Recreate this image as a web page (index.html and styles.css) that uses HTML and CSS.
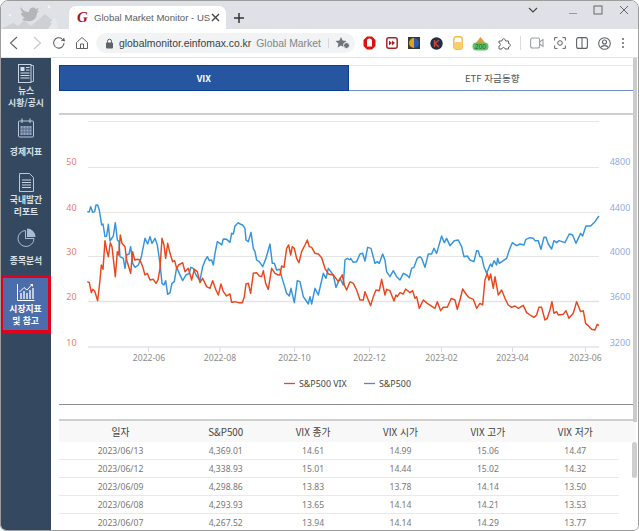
FILE: index.html
```html
<!DOCTYPE html>
<html lang="ko">
<head>
<meta charset="utf-8">
<title>Global Market Monitor</title>
<link rel="stylesheet" href="styles.css">
</head>
<body>
<div class="window">
  <header class="tabstrip">
    <svg class="doodle" width="68" height="28" viewBox="0 0 68 28">
      <path d="M0 28 L12 22 L17 25 L23 19 L30 25 L44 13 L52 20 L60 28Z" fill="#ced0d4"/>
      <path d="M47 28 L51 22 L49 22 L53 17 L57 22 L55 22 L59 28Z" fill="#e6e8ea"/>
      <path d="M20 6 C22 10 25 11 28 11 C28 7 32 5 35 8 L38 7 L36 10 L38 10 L36 12 C36 18 31 21 26 20 C24 20 22 19 21 18 L24 17 C21 15 20 14 20 12 L22 12 C20 10 19 8 20 6Z" fill="#b4b5b8"/>
      <circle cx="9" cy="14" r="1.2" fill="#f4f4f4"/><circle cx="48" cy="6" r="1.4" fill="#f4f4f4"/>
    </svg>
    <div class="tab">
      <span class="favicon">G</span>
      <span class="tab-title">Global Market Monitor - US</span>
      <svg class="tab-close" width="9" height="9" viewBox="0 0 9 9"><path d="M1 1L8 8M8 1L1 8" stroke="#444" stroke-width="1.4"/></svg>
    </div>
    <svg class="newtab" width="10" height="10" viewBox="0 0 10 10"><path d="M5 0V10M0 5H10" stroke="#333" stroke-width="1.5"/></svg>
    <div class="winctl">
      <svg width="10" height="6" viewBox="0 0 10 6" class="wc-chev"><path d="M1 1L5 5L9 1" fill="none" stroke="#444" stroke-width="1.1"/></svg>
      <svg width="10" height="10" viewBox="0 0 10 10" class="wc-min"><path d="M1 8.5H9" stroke="#999" stroke-width="1.2"/></svg>
      <svg width="10" height="10" viewBox="0 0 10 10" class="wc-max"><rect x="1" y="1" width="8" height="8" fill="none" stroke="#666"/></svg>
      <svg width="10" height="10" viewBox="0 0 10 10" class="wc-close"><path d="M1 1L9 9M9 1L1 9" stroke="#666" stroke-width="1"/></svg>
    </div>
  </header>
  <div class="toolbar">
    <svg class="nav-ic" width="16" height="16" viewBox="0 0 16 16"><path d="M11 2L4.5 8L11 14" fill="none" stroke="#5f6368" stroke-width="1.1"/></svg>
    <svg class="nav-ic" width="16" height="16" viewBox="0 0 16 16"><path d="M5 2L11.500 8L5 14" fill="none" stroke="#c4c6c9" stroke-width="1.1"/></svg>
    <svg class="nav-ic" width="16" height="16" viewBox="0 0 16 16"><path d="M13 8A5.200 5.200 0 1 1 11 3.800" fill="none" stroke="#5f6368" stroke-width="1.100"/><path d="M10 6H14.500L12.500 2.500Z" fill="#5f6368" transform="rotate(15 12 5)"/></svg>
    <svg class="nav-ic" width="16" height="16" viewBox="0 0 16 16"><path d="M2.500 7.500L8 2.500L13.500 7.500V13.500H2.500Z M6.500 13.500V9H9.500V13.500" fill="none" stroke="#5f6368" stroke-width="1"/></svg>
    <div class="omnibox">
      <svg width="9" height="11" viewBox="0 0 9 11" class="lock"><rect x="1" y="4.500" width="7" height="6" rx="1" fill="#5f6368"/><path d="M2.500 5V3.200A2 2 0 0 1 6.500 3.200V5" fill="none" stroke="#5f6368" stroke-width="1"/></svg>
      <span class="url">globalmonitor.einfomax.co.kr</span>
      <span class="page-name">Global Market</span>
      <span class="omni-end">
        <svg width="16" height="14" viewBox="0 0 16 14"><path d="M6 1L7.600 4.500L11.500 5L8.600 7.500L9.400 11.500L6 9.500L2.600 11.500L3.400 7.500L0.500 5L4.400 4.500Z" fill="#70757a"/><circle cx="11.500" cy="9.500" r="3" fill="#70757a" stroke="#f1f3f4"/></svg>
      </span>
    </div>
    <div class="exts">
      <svg width="13" height="14" viewBox="0 0 13 14"><path d="M4 0.500H9L12.500 4V10L9 13.500H4L0.500 10V4Z" fill="#d8150c"/><path d="M4 10.500V5A1 1 0 0 1 9 5V10.500Z" fill="#fff"/></svg>
      <svg width="12" height="12" viewBox="0 0 12 12"><rect x="0.800" y="0.800" width="10.400" height="10.400" rx="2" fill="#fff" stroke="#a8242c" stroke-width="1.500"/><path d="M3 3.500L6 6L3 8.500ZM6 3.500L9 6L6 8.500Z" fill="#a8242c"/></svg>
      <svg width="12" height="12" viewBox="0 0 12 12"><rect width="12" height="12" fill="#3a3a30"/><path d="M6 1A5 5 0 0 0 6 11Z" fill="#e0a020"/><path d="M6 1A5 5 0 0 1 6 11Z" fill="#2a5ab0"/></svg>
      <svg width="13" height="13" viewBox="0 0 13 13"><circle cx="6.500" cy="6.500" r="6.200" fill="#1d3045"/><path d="M4.500 3V10M9 3L5 6.500L9 10" fill="none" stroke="#c8463c" stroke-width="1.500"/></svg>
      <svg width="10" height="14" viewBox="0 0 10 14"><rect x="0.800" y="0.800" width="8.400" height="12.400" rx="2.500" fill="#fff" stroke="#f4b942" stroke-width="1.400"/><rect x="1" y="6" width="8" height="7" rx="2" fill="#f9cf6e"/></svg>
      <svg class="ext-200" width="17" height="15" viewBox="0 0 17 15"><path d="M3 8L8.500 1L14 8Z" fill="#e39a3a"/><rect x="0.500" y="6.500" width="16" height="8" rx="4" fill="#5cc36b"/><text x="8.500" y="13.200" text-anchor="middle" class="ext-200-text">200</text></svg>
      <svg width="13" height="13" viewBox="0 0 13 13"><path d="M1 4H4C4 1 7.500 1 7.500 4H10.500V6.500C13 6.500 13 10 10.500 10V12H7C7 10 4 10 4 12H1V9C3 9 3 6 1 6Z" fill="none" stroke="#5f6368" stroke-width="1"/></svg>
      <i class="ext-sep"></i>
      <svg width="14" height="12" viewBox="0 0 14 12"><rect x="0.600" y="1" width="9" height="10" rx="2" fill="none" stroke="#9aa0a6" stroke-width="1.100"/><path d="M9.600 5L13 2.500V9.500L9.600 7" fill="none" stroke="#9aa0a6" stroke-width="1.100"/></svg>
      <svg width="12" height="12" viewBox="0 0 12 12"><path d="M0.600 3.500V0.600H3.500M8.500 0.600H11.400V3.500M11.400 8.500V11.400H8.500M3.500 11.400H0.600V8.500" fill="none" stroke="#5f6368"/><circle cx="6" cy="6" r="2.300" fill="none" stroke="#5f6368"/></svg>
      <svg width="12" height="12" viewBox="0 0 12 12"><rect x="0.600" y="0.600" width="10.800" height="10.800" rx="2" fill="none" stroke="#5f6368" stroke-width="1.100"/><path d="M6 0.600V11.400" stroke="#5f6368" stroke-width="1.100"/></svg>
      <svg width="13" height="13" viewBox="0 0 13 13"><circle cx="6.500" cy="6.500" r="5.800" fill="none" stroke="#5f6368" stroke-width="1.100"/><circle cx="6.500" cy="5" r="2" fill="none" stroke="#5f6368" stroke-width="1.100"/><path d="M2.700 10.500C4 8 9 8 10.300 10.500" fill="none" stroke="#5f6368" stroke-width="1.100"/></svg>
      <svg width="4" height="12" viewBox="0 0 4 12"><circle cx="2" cy="2" r="1" fill="#5f6368"/><circle cx="2" cy="6" r="1" fill="#5f6368"/><circle cx="2" cy="10" r="1" fill="#5f6368"/></svg>
    </div>
  </div>
  <div class="page">
    <nav class="sidebar">
      <a class="item item-news">
        <span class="ic"><svg width="16" height="19" viewBox="0 0 16 19"><path d="M13 1.500H15.500V17.500H13" fill="none" stroke="#a9bbd6"/><rect x="0.500" y="0.500" width="12.500" height="18" fill="none" stroke="#c7d4e6"/><rect x="2.500" y="3" width="4" height="4" fill="#d4deeb"/><path d="M8 3.500H11.500M8 6H11.500M2.500 9H11.500M2.500 11.500H11.500M2.500 14H11.500" stroke="#d4deeb"/></svg></span>
        <span>뉴스</span><span>시황/공시</span>
      </a>
      <a class="item item-econ">
        <span class="ic"><svg width="16" height="20" viewBox="0 0 16 20"><rect x="0.500" y="3" width="15" height="16" rx="1" fill="none" stroke="#b9c8dd"/><path d="M4 0.500V5M12 0.500V5" stroke="#c7d4e6"/><path d="M2.500 8H13.500V17H2.500Z" fill="#8fa5c4"/><path d="M5 8V17M8 8V17M11 8V17M2.500 11H13.500M2.500 14H13.500" stroke="#3a4f69" stroke-width=".6"/></svg></span>
        <span>경제지표</span>
      </a>
      <a class="item item-report">
        <span class="ic"><svg width="15" height="19" viewBox="0 0 15 19"><path d="M0.500 0.500H10.500L14.500 4.500V18.500H0.500Z" fill="none" stroke="#b9c8dd"/><path d="M3 7H12M3 9.500H12M3 12H12M3 14.500H12" stroke="#c7d4e6"/></svg></span>
        <span>국내발간</span><span>리포트</span>
      </a>
      <a class="item item-stock">
        <span class="ic"><svg width="19" height="19" viewBox="0 0 19 19"><path d="M8.500 2.500A8 8 0 1 0 17 10.500H8.500Z" fill="none" stroke="#a9bbd6"/><path d="M10 0.500A8.500 8.500 0 0 1 18.500 9H10Z" fill="#a9bbd6"/></svg></span>
        <span>종목분석</span>
      </a>
      <a class="item item-market">
        <span class="ic"><svg width="18" height="18" viewBox="0 0 18 18"><path d="M0.500 1V17.500H17.500" fill="none" stroke="#fff"/><path d="M4 16V10M7 16V8M10 16V10M13 16V7M16 16V5" stroke="#fff" stroke-width="1.300"/><path d="M2.500 9L7 4.500L10 7L15 1.500" fill="none" stroke="#fff"/><path d="M13 1H16V4Z" fill="#fff"/></svg></span>
        <span>시장지표</span><span>및 참고</span>
      </a>
    </nav>
    <main class="main">
      <div class="tabs">
        <div class="tab-btn on">VIX</div>
        <div class="tab-btn">ETF 자금동향</div>
      </div>
      <div class="chart-wrap">
        <svg class="chart" width="574" height="289" viewBox="59 115 574 289">
          <g class="grid">
            <path d="M88 121.500H599M88 167.500H599M88 212.500H599M88 256.500H599"/>
            <path class="grid-strong" d="M88 301.500H599M88 347H599"/>
            <path d="M148.500 347V352M220 347V352M294.500 347V352M369.500 347V352M441.500 347V352M512.500 347V352M585.500 347V352"/>
          </g>
          <g class="axis-l">
            <text x="71.500" y="165.300">50</text><text x="71.500" y="210.500">40</text><text x="71.500" y="255.300">30</text><text x="71.500" y="300.300">20</text><text x="71.500" y="345.500">10</text>
          </g>
          <g class="axis-r">
            <text x="620" y="165.300">4800</text><text x="620" y="210.500">4400</text><text x="620" y="255.300">4000</text><text x="620" y="300.300">3600</text><text x="620" y="345.500">3200</text>
          </g>
          <g class="axis-x">
            <text x="149" y="361">2022-06</text><text x="220" y="361">2022-08</text><text x="294.500" y="361">2022-10</text><text x="369.500" y="361">2022-12</text><text x="441.500" y="361">2023-02</text><text x="512.500" y="361">2023-04</text><text x="585.500" y="361">2023-06</text>
          </g>
          <g transform="translate(60 230) scale(.3333)">
            <polyline class="blue" points="82,-55 88,-55 92,-70 98,-53 104,-55 108,-75 113,-75 118,-60 125,-15 129,-18 135,20 140,18 145,-17 150,33 160,18 166,-22 172,30 177,35 180,80 190,85 195,115 200,75 207,72 212,50 218,100 225,112 235,105 243,85 255,25 263,42 270,20 276,40 285,25 292,45 300,100 306,160 312,165 317,152 323,193 330,188 336,160 343,155 350,112 358,130 368,152 378,135 388,130 392,112 400,115 408,135 420,152 428,110 435,92 442,80 448,92 455,90 460,105 465,70 472,35 480,40 485,45 490,27 500,28 510,37 515,10 520,12 525,-12 535,-22 540,-18 548,-15 555,-5 558,30 565,35 573,7 580,55 585,65 590,90 598,95 608,110 618,85 630,42 637,100 643,100 650,120 660,118 665,140 680,190 688,198 693,175 703,218 712,152 720,155 730,200 745,222 750,200 755,222 765,175 775,195 790,130 798,145 805,115 820,135 828,172 840,145 850,165 855,90 862,85 870,90"/>
            <polyline class="blue" transform="translate(840 0)" points="30,90 32,85 40,97 50,95 60,72 68,70 75,93 83,52 93,55 105,100 112,95 118,100 128,72 135,90 140,125 150,140 160,122 170,140 180,150 190,130 200,135 208,143 215,115 222,112 232,85 240,80 245,85 255,112 265,72 275,72 282,55 290,70 305,18 313,38 320,25 330,47 343,32 355,30 365,50 372,80 382,78 390,90 402,95 410,62 415,63 420,80 425,80 432,110 440,130 448,110 452,102 456,110 462,92 470,105 473,85 478,100 490,92 500,85 508,60 517,38 530,47 540,42 552,45 558,28 570,23 580,25 585,32 595,32 603,58 612,22 618,22 625,42 635,57 642,32 650,38 657,32 675,38 688,12 698,15 708,40 722,10 728,18 738,-12 752,-12 765,-25 777,-42"/>
            <polyline class="orange" points="82,155 88,158 94,188 98,178 104,183 113,212 120,150 124,105 129,118 135,32 140,60 145,80 151,38 156,50 166,140 172,65 176,75 181,15 186,40 195,50 200,90 212,130 218,65 224,90 232,88 240,90 248,110 255,135 262,130 270,150 280,148 288,160 294,150 300,115 306,25 312,45 317,85 323,40 330,70 338,95 344,92 350,115 356,105 368,98 375,125 385,115 395,150 403,118 412,125 420,158 428,145 440,170 450,175 458,152 468,180 475,195 483,162 490,185 500,198 510,192 515,217 525,215 535,218 547,218 553,200 558,162 565,160 572,190 580,130 590,128 598,138 605,140 610,122 617,160 625,178 635,115 645,130 655,135 660,135 665,108 672,112 680,55 686,45 692,75 697,50 703,55 710,85 717,98 725,65 735,45 742,30 748,50 755,52 765,70 775,72 785,83 795,115 805,132 820,135 835,155 847,135 853,165 860,180 870,155"/>
            <polyline class="orange" transform="translate(840 0)" points="30,155 40,160 50,180 60,210 70,210 75,185 85,210 92,227 100,200 108,180 118,182 125,148 135,195 140,178 150,182 162,213 168,195 172,200 180,188 190,192 197,177 210,188 218,182 225,205 230,200 238,235 250,210 262,220 285,235 292,215 302,242 310,232 322,232 334,205 345,210 352,238 360,210 368,177 380,195 388,203 400,208 410,235 420,220 428,225 435,150 442,130 447,150 452,132 460,175 465,140 475,195 485,180 495,205 505,225 515,232 525,228 535,235 550,226 560,248 575,258 582,262 590,255 597,232 605,232 615,270 622,265 630,240 636,215 642,250 650,245 655,255 670,253 678,242 687,265 700,250 710,215 722,245 730,242 737,280 745,287 755,298 765,300 772,283 777,287"/>
          </g>
          <g class="legend">
            <path d="M284 383.500H295" class="leg-o"/><text x="299" y="387">S&amp;P500 VIX</text>
            <path d="M364 383.500H375" class="leg-b"/><text x="379" y="387">S&amp;P500</text>
          </g>
        </svg>
      </div>
      <section class="grid-table">
        <div class="thead">
          <span>일자</span><span>S&amp;P500</span><span>VIX 종가</span><span>VIX 시가</span><span>VIX 고가</span><span>VIX 저가</span>
        </div>
        <div class="trow"><span>2023/06/13</span><span>4,369.01</span><span>14.61</span><span>14.99</span><span>15.06</span><span>14.47</span></div>
        <div class="trow"><span>2023/06/12</span><span>4,338.93</span><span>15.01</span><span>14.44</span><span>15.02</span><span>14.32</span></div>
        <div class="trow"><span>2023/06/09</span><span>4,298.86</span><span>13.83</span><span>13.78</span><span>14.14</span><span>13.50</span></div>
        <div class="trow"><span>2023/06/08</span><span>4,293.93</span><span>13.65</span><span>14.14</span><span>14.21</span><span>13.53</span></div>
        <div class="trow"><span>2023/06/07</span><span>4,267.52</span><span>13.94</span><span>14.14</span><span>14.29</span><span>13.77</span></div>
      </section>
    </main>
    <div class="page-scroll"></div>
    <div class="table-scroll"></div>
  </div>
</div>
</body>
</html>
```
FILE: styles.css
```css
* { box-sizing: border-box; }
html, body { margin: 0; height: 100%; background: #fff; overflow: hidden; }
body { font-family: "Noto Sans", "Noto Sans CJK KR", sans-serif; }

.window {
  width: 639px; height: 531px;
  display: flex; flex-direction: column;
  border: 1px solid #9c9c9c;
  border-radius: 8px 8px 6px 6px;
  overflow: hidden;
  background: #fff;
}

/* browser chrome */
.tabstrip { height: 28px; background: #dee1e6; display: flex; align-items: flex-end; position: relative; flex: none; }
.doodle { flex: none; }
.tab {
  width: 157px; height: 23px;
  background: #fff; border-radius: 7px 7px 0 0;
  display: flex; align-items: center; padding: 0 7px 0 8px; flex: none;
}
.favicon { font: italic 700 15px "Liberation Serif", serif; color: #a8101c; width: 17px; flex: none; }
.tab-title { font: 9.6px "Liberation Sans", sans-serif; color: #5a5e62; white-space: nowrap; width: 113px; flex: none; }
.tab-close { margin-left: 4px; flex: none; }
.newtab { margin: 0 0 6px 8px; flex: none; }
.winctl { margin-left: auto; align-self: flex-start; height: 18px; display: flex; align-items: center; padding-right: 9px; }
.winctl svg { display: block; }
.wc-chev { margin-right: 30px; }
.wc-min { margin-right: 15px; }
.wc-max { margin-right: 16px; }

.toolbar { height: 29px; flex: none; background: #fff; border-bottom: 1px solid #e2e3e5; display: flex; align-items: center; padding-left: 5px; }
.nav-ic { flex: none; margin-right: 6.5px; }
.omnibox {
  width: 259px; height: 20px; flex: none;
  background: #f1f3f4; border-radius: 10px;
  display: flex; align-items: center; padding-left: 9px;
  font: 10.4px "Liberation Sans", sans-serif; white-space: nowrap; position: relative;
}
.lock { flex: none; margin-right: 5px; }
.url { color: #3c4043; }
.page-name { color: #80868b; margin-left: 5px; }
.omni-end { position: absolute; right: 0; top: 0; height: 20px; width: 25px; display: flex; align-items: center; padding-left: 5px; border-radius: 0 10px 10px 0; }
.omni-end::before { content: ""; position: absolute; left: -2px; top: 5px; width: 1px; height: 10px; background: #d4d6d9; }
.exts { display: flex; align-items: center; gap: 10px; margin-left: 8px; }
.exts svg { display: block; flex: none; }
.ext-200 { margin: 0 -1px; }
.ext-200-text { font: 6.5px "Liberation Sans", sans-serif; fill: #1c5a2a; }
.ext-sep { width: 1px; height: 14px; background: #dadce0; margin: 0 -1px; }

/* page */
.page { flex: 1; min-height: 0; display: flex; position: relative; background: #fff; }
.sidebar { width: 50px; flex: none; background: #34495f; display: flex; flex-direction: column; }
.item {
  display: flex; flex-direction: column; align-items: center;
  color: #d9e0e8; font: 700 8.8px/12px "Noto Sans CJK KR", sans-serif; white-space: nowrap;
}
.ic { height: 23px; display: flex; align-items: center; justify-content: center; }
.ic svg { display: block; }
.item-news { height: 55px; padding-top: 4px; }
.item-econ { height: 51px; padding-top: 3px; }
.item-econ .ic { margin-bottom: 7px; }
.item-report { height: 54px; padding-top: 7px; }
.item-stock { height: 57px; padding-top: 8px; }
.item-stock .ic { margin-bottom: 6px; }
.item-market { height: 58px; padding-top: 2px; background: #4b6dac; border: 3px solid #e2001a; border-left-width: 2px; color: #fff; }

.main { flex: 1; min-width: 0; padding: 7px 2px 0 8px; overflow: hidden; }
.tabs { display: flex; height: 26px; }
.tab-btn {
  flex: 1; display: flex; align-items: center; justify-content: center;
  font: 9.6px "Noto Sans CJK KR", sans-serif; color: #555;
  border-top: 1px solid #e8e8e8; border-bottom: 1px solid #6f8dc2;
}
.tab-btn.on { background: #25569f; border: 1px solid #0b3f96; color: #fff; font-weight: 700; font-size: 9px; }
.chart-wrap { margin-top: 22px; border-top: 2px solid #cfcfcf; border-bottom: 1px solid #8d8d8d; height: 292px; }
.chart { display: block; }
.grid path { stroke: #e6e6e6; fill: none; }
.grid .grid-strong { stroke: #e2e4ec; stroke-width: 1.500; }
.grid path:last-child { stroke: #d6dce6; }
.axis-l text { font: 9px "Noto Sans", sans-serif; fill: #ea7d72; text-anchor: middle; }
.axis-r text { font: 9px "Noto Sans", sans-serif; fill: #93aadb; text-anchor: middle; }
.axis-x text { font: 8.6px "Noto Sans", sans-serif; fill: #8a8a8a; text-anchor: middle; }
polyline { fill: none; stroke-width: 4.4; stroke-linejoin: round; }
.blue { stroke: #3495dc; }
.orange { stroke: #e8481c; }
.legend text { font: 8.900px "Noto Sans", sans-serif; fill: #444; }
.leg-o { stroke: #e8481c; stroke-width: 1.300; }
.leg-b { stroke: #3495dc; stroke-width: 1.300; }

.grid-table { margin-top: 14px; }
.thead, .trow { display: grid; grid-template-columns: 123px repeat(5, 87.4px); text-align: center; white-space: nowrap; }
.thead { height: 23px; align-items: center; background: #f8f8f8; border-top: 2px solid #cfcfcf; font: 9.8px "Noto Sans CJK KR", sans-serif; color: #444; }
.trow { width: 560px; height: 18px; align-items: center; border-bottom: 1px solid #e9e9e9; font: 8.600px "Noto Sans", sans-serif; color: #777; }

.page-scroll { position: absolute; right: 1px; top: 0; width: 4px; height: 364px; background: #cbcbcb; }
.table-scroll { position: absolute; right: 1px; top: 384px; width: 5px; height: 36px; background: #cdcdcd; border-radius: 3px; }
```
